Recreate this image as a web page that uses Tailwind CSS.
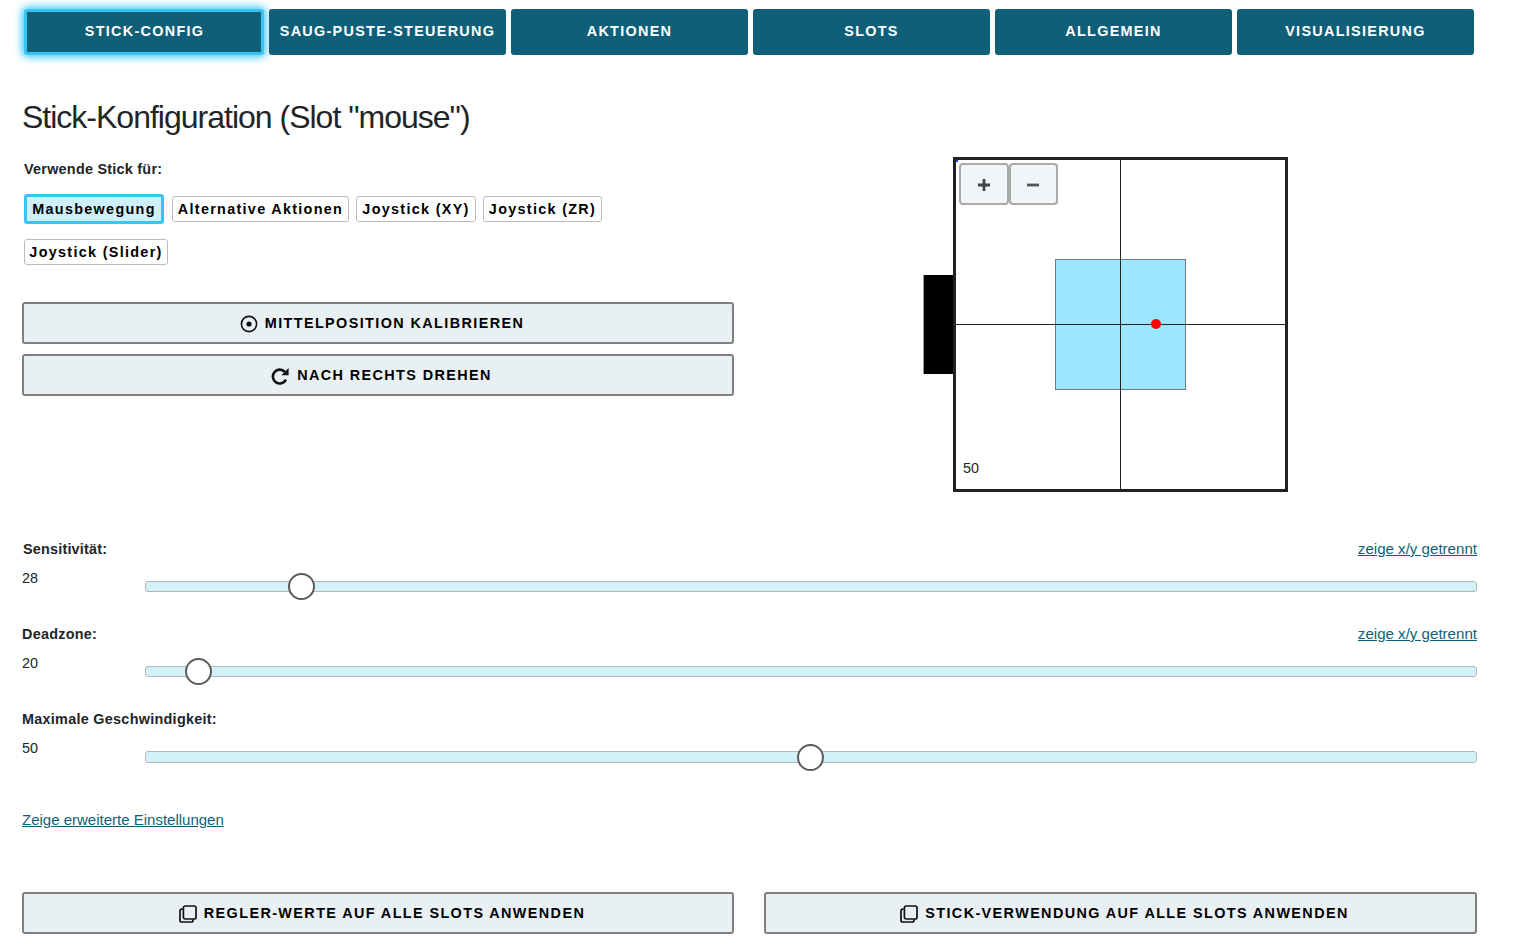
<!DOCTYPE html>
<html lang="de">
  <head>
    <meta charset="UTF-8" />
    <title>Stick-Konfiguration</title>
    <script src="https://cdn.jsdelivr.net/npm/@tailwindcss/browser@4"></script>
  </head>
  <body class="bg-white font-['Liberation_Sans',Arial,sans-serif] text-[#212529] overflow-hidden">
    <!-- tabs -->
    <nav class="flex gap-[5px] pl-[24px] pt-[9px] text-[14.4px] font-bold tracking-[1.3px] text-white">
      <button class="h-[46px] w-[240px] rounded-[3px] border-[3px] border-[#38c5f5] bg-[#0f5f78] pl-px shadow-[0_0_8px_2px_#38c5f5]">STICK-CONFIG</button>
      <button class="h-[46px] w-[237px] rounded-[3px] bg-[#0f5f78]">SAUG-PUSTE-STEUERUNG</button>
      <button class="h-[46px] w-[237px] rounded-[3px] bg-[#0f5f78]">AKTIONEN</button>
      <button class="h-[46px] w-[237px] rounded-[3px] bg-[#0f5f78]">SLOTS</button>
      <button class="h-[46px] w-[237px] rounded-[3px] bg-[#0f5f78]">ALLGEMEIN</button>
      <button class="h-[46px] w-[237px] rounded-[3px] bg-[#0f5f78]">VISUALISIERUNG</button>
    </nav>

    <main class="ml-[22px] w-[1455px]">
      <h1 class="mt-[42px] h-[40px] text-[32px] leading-[40px] tracking-[-1px]">Stick-Konfiguration (Slot "mouse")</h1>

      <div class="mt-[20px] flex items-center">
        <!-- left column -->
        <div class="h-[335px] w-[712px]">
          <div class="pl-[2px] text-[14.4px] font-bold leading-[24px] tracking-[0.25px]">Verwende Stick für:</div>
          <div class="mt-[13px] flex h-[30px] items-center gap-[7px] pl-[2px] text-[14.4px] font-bold tracking-[1.3px] text-black">
            <button class="h-[30px] w-[140px] rounded-[3px] border-[3px] border-[#38c5f5] bg-[#cff0fb] pt-px">Mausbewegung</button>
            <button class="ml-[1px] h-[26px] w-[177px] rounded-[3px] border border-[#bbb] bg-white pt-px">Alternative Aktionen</button>
            <button class="h-[26px] w-[120px] rounded-[3px] border border-[#bbb] bg-white pt-px">Joystick (XY)</button>
            <button class="h-[26px] w-[119px] rounded-[3px] border border-[#bbb] bg-white pt-px">Joystick (ZR)</button>
          </div>
          <div class="mt-[15px] pl-[2px] text-[14.4px] font-bold tracking-[1.3px] text-black">
            <button class="h-[26px] w-[144px] rounded-[3px] border border-[#bbb] bg-white pt-px">Joystick (Slider)</button>
          </div>
          <button class="mt-[37px] flex h-[42px] w-full items-center justify-center gap-[7px] rounded-[3px] border-2 border-[#808080] bg-[#e9f0f4] pl-[8px] pt-px text-[14.4px] font-bold tracking-[1.4px] text-black">
            <svg class="h-[18px] w-[18px]" viewBox="0 0 18 18" fill="none" stroke="#111" stroke-width="1.6"><circle cx="9" cy="9" r="7.6" /><circle cx="9" cy="9" r="2.6" fill="#111" stroke="none" /></svg>
            MITTELPOSITION KALIBRIEREN
          </button>
          <button class="mt-[10px] flex h-[42px] w-full items-center justify-center gap-[7px] rounded-[3px] border-2 border-[#808080] bg-[#e9f0f4] pl-[8px] pt-px text-[14.4px] font-bold tracking-[1.4px] text-black">
            <svg class="ml-[-1px] mr-px h-[18px] w-[18px]" viewBox="0 0 18 18" fill="none"><path d="M13.8 4.8A6.9 6.9 0 1 0 15 12.6" stroke="#111" stroke-width="2.6" /><path d="M17.6 1V8.2H10.4Z" fill="#111" /></svg>
            NACH RECHTS DREHEN
          </button>
        </div>

        <!-- stick preview -->
        <div class="ml-[189px] h-[99px] w-[30px] border-l border-[#999] bg-black"></div>
        <div class="relative h-[335px] w-[335px] border-[3px] border-[#222]">
          <div class="absolute left-[99px] top-[99px] h-[131px] w-[131px] border border-[#777] bg-[#9de6ff]"></div>
          <div class="absolute left-[164px] top-0 h-full w-px bg-[#222]"></div>
          <div class="absolute left-0 top-[164px] h-px w-full bg-[#222]"></div>
          <div class="absolute left-[195px] top-[159px] h-[10px] w-[10px] rounded-full bg-[#f00]"></div>
          <div class="absolute left-0 top-0 h-[2px] w-[2px] bg-blue-700"></div>
          <div class="absolute left-[3px] top-[3px] flex">
            <button class="flex h-[42px] w-[50px] items-center justify-center rounded-[4px] border-2 border-[#aaa] bg-[#f0f5f8] pt-[2px]">
              <svg class="h-[12px] w-[12px]" viewBox="0 0 12 12" fill="#444"><path d="M4.6 0h2.8v4.6H12v2.8H7.4V12H4.6V7.4H0V4.6h4.6z" /></svg>
            </button>
            <button class="flex h-[42px] w-[49px] items-center justify-center rounded-[4px] border-2 border-[#aaa] bg-[#f0f5f8] pr-[2px] pt-[2px]">
              <svg class="h-[12px] w-[12px]" viewBox="0 0 12 12" fill="#555"><path d="M0 4.6h12v2.8H0z" /></svg>
            </button>
          </div>
          <div class="absolute left-[7px] top-[298px] text-[14.4px] leading-[20px]">50</div>
        </div>
      </div>

      <!-- sliders -->
      <section class="mt-[45px]">
        <div class="h-[85px]">
          <div class="flex h-[24px] items-center justify-between text-[14.4px] leading-[24px]">
            <b class="pl-[1px] tracking-[0.2px]">Sensitivität:</b>
            <a href="#" class="text-[15.1px] text-[#0f5f78] underline">zeige x/y getrennt</a>
          </div>
          <div class="flex">
            <span class="w-[123px] pt-[7px] text-[14.4px] leading-[20px]">28</span>
            <div class="relative mt-[20px] h-[11px] grow rounded-[3px] border border-[#b5b5b5] bg-[#d3f1f9]">
              <div class="absolute left-[142px] top-[-9px] h-[27px] w-[27px] rounded-full border-[2.5px] border-[#5a5a5a] bg-white"></div>
            </div>
          </div>
        </div>
        <div class="h-[85px]">
          <div class="flex h-[24px] items-center justify-between text-[14.4px] leading-[24px]">
            <b class="tracking-[0.25px]">Deadzone:</b>
            <a href="#" class="text-[15.1px] text-[#0f5f78] underline">zeige x/y getrennt</a>
          </div>
          <div class="flex">
            <span class="w-[123px] pt-[7px] text-[14.4px] leading-[20px]">20</span>
            <div class="relative mt-[20px] h-[11px] grow rounded-[3px] border border-[#b5b5b5] bg-[#d3f1f9]">
              <div class="absolute left-[39px] top-[-9px] h-[27px] w-[27px] rounded-full border-[2.5px] border-[#5a5a5a] bg-white"></div>
            </div>
          </div>
        </div>
        <div class="h-[85px]">
          <div class="flex h-[24px] items-center text-[14.4px] leading-[24px]">
            <b class="tracking-[0.28px]">Maximale Geschwindigkeit:</b>
          </div>
          <div class="flex">
            <span class="w-[123px] pt-[7px] text-[14.4px] leading-[20px]">50</span>
            <div class="relative mt-[20px] h-[12px] grow rounded-[3px] border border-[#b5b5b5] bg-[#d3f1f9]">
              <div class="absolute left-[651px] top-[-8px] h-[27px] w-[27px] rounded-full border-[2.5px] border-[#5a5a5a] bg-white"></div>
            </div>
          </div>
        </div>
      </section>

      <a href="#" class="mt-[16px] block text-[15px] leading-[24px] text-[#0f5f78] underline">Zeige erweiterte Einstellungen</a>

      <!-- bottom actions -->
      <div class="mt-[60px] flex gap-[30px]">
        <button class="flex h-[42px] w-[712px] items-center justify-center gap-[7px] rounded-[3px] border-2 border-[#808080] bg-[#e9f0f4] pl-[8px] pt-px text-[14.4px] font-bold tracking-[1.4px] text-black">
          <svg class="h-[18px] w-[18px]" viewBox="0 0 18 18" fill="none" stroke="#111" stroke-width="1.7"><rect x="4.4" y="1" width="12.6" height="13" rx="1.8" /><path d="M3.6 4.2H2.8A1.8 1.8 0 0 0 1 6v9.2A1.8 1.8 0 0 0 2.8 17h9.4a1.8 1.8 0 0 0 1.8-1.8v-.6" /></svg>
          REGLER-WERTE AUF ALLE SLOTS ANWENDEN
        </button>
        <button class="flex h-[42px] w-[713px] items-center justify-center gap-[7px] rounded-[3px] border-2 border-[#808080] bg-[#e9f0f4] pl-[8px] pt-px text-[14.4px] font-bold tracking-[1.4px] text-black">
          <svg class="h-[18px] w-[18px]" viewBox="0 0 18 18" fill="none" stroke="#111" stroke-width="1.7"><rect x="4.4" y="1" width="12.6" height="13" rx="1.8" /><path d="M3.6 4.2H2.8A1.8 1.8 0 0 0 1 6v9.2A1.8 1.8 0 0 0 2.8 17h9.4a1.8 1.8 0 0 0 1.8-1.8v-.6" /></svg>
          STICK-VERWENDUNG AUF ALLE SLOTS ANWENDEN
        </button>
      </div>
    </main>
  </body>
</html>
